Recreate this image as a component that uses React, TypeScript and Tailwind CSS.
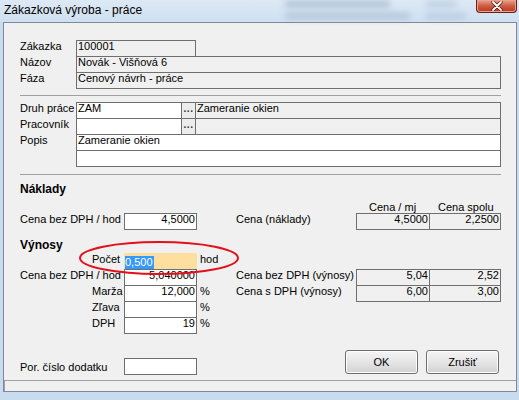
import React from "react";

type BoxProps = {
  className?: string;
  white?: boolean;
  right?: boolean;
  children?: React.ReactNode;
};

// flat edit box as drawn by the old VCL form
function Box({ className = "", white, right, children }: BoxProps) {
  return (
    <div
      className={`h-[17px] shrink-0 overflow-hidden whitespace-nowrap border border-[#6f6f6f] leading-[11px] ${
        white ? "bg-white" : "bg-[#f0f0f0]"
      } ${right ? "pr-[1px] text-right" : "pl-[1px]"} ${className}`}
    >
      {children}
    </div>
  );
}

function Label({ className = "", children }: { className?: string; children?: React.ReactNode }) {
  return <div className={`shrink-0 whitespace-nowrap pt-[1px] leading-[11px] ${className}`}>{children}</div>;
}

function DotsButton() {
  return (
    <div className="flex h-[17px] w-[15px] shrink-0 items-end justify-center -ml-px border border-[#6f6f6f] bg-[#ececec] pb-[3px] text-[10px] font-bold leading-[6px] text-[#333]">
      ···
    </div>
  );
}

function WinButton({ children }: { children: React.ReactNode }) {
  return (
    <button className="flex h-[24px] w-[73px] items-center justify-center rounded-[3px] border border-[#707070] bg-gradient-to-b from-[#f4f4f4] via-[#e6e6e6] to-[#d2d2d2] text-[11px] text-black shadow-[inset_0_0_0_1px_#fcfcfc]">
      {children}
    </button>
  );
}

export default function App() {
  return (
    <div className="relative flex h-[400px] w-[519px] flex-col overflow-hidden bg-[#c9dcef] font-['Liberation_Sans',Arial,sans-serif] text-[11px] text-black">
      {/* title bar */}
      <div className="flex h-[22px] shrink-0 items-start bg-gradient-to-b from-[#dde9f5] to-[#cfe0f1]">
        <div className="pl-[4px] pt-[3px] text-[12px] leading-[14px] text-black">Zákazková výroba - práce</div>
        <div className="ml-auto mr-[10px] flex gap-[16px] pt-[1px] opacity-50 blur-[3px]">
          <div className="flex flex-col gap-[6px]">
            <div className="h-[6px] w-[105px] bg-[#7f97b3]" />
            <div className="h-[6px] w-[125px] bg-[#8ea4be]" />
          </div>
          <div className="flex flex-col gap-[6px]">
            <div className="h-[6px] w-[30px] bg-[#9fb4cc]" />
            <div className="h-[6px] w-[40px] bg-[#9fb4cc]" />
          </div>
        </div>
        <div className="mr-[2px] flex h-[13px] w-[41px] items-center justify-center rounded-b-[4px] border border-t-0 border-[#6b2216] bg-gradient-to-b from-[#e6a28f] via-[#cd5a40] to-[#b8391f] shadow-[inset_0_0_0_1px_#eaa08d]">
          <svg width="12" height="10" viewBox="0 0 12 10">
            <path d="M2 1 L10 9 M10 1 L2 9" stroke="#4a1a12" strokeWidth="3.2" strokeLinecap="round" />
            <path d="M2 1 L10 9 M10 1 L2 9" stroke="#ffffff" strokeWidth="1.8" strokeLinecap="round" />
          </svg>
        </div>
      </div>

      {/* client area */}
      <div className="ml-[3px] mr-[2px] flex h-[370px] shrink-0 flex-col border border-[#7d8a99] bg-[#f0f0f0]">
        <div className="flex flex-col pl-[16px] pr-[15px] pt-[17px]">
          {/* header info */}
          <div className="flex h-[16px]">
            <Label className="w-[56px]">Zákazka</Label>
            <Box className="w-[120px]">100001</Box>
          </div>
          <div className="flex h-[16px]">
            <Label className="w-[56px]">Názov</Label>
            <Box className="w-[425px]">Novák - Višňová 6</Box>
          </div>
          <div className="flex h-[16px]">
            <Label className="w-[56px]">Fáza</Label>
            <Box className="w-[425px]">Cenový návrh - práce</Box>
          </div>

          <div className="mt-[7px] h-px w-[481px] bg-[#a0a0a0]" />

          {/* work */}
          <div className="mt-[6px] flex h-[16px]">
            <Label className="w-[56px]">Druh práce</Label>
            <Box white className="w-[106px]">ZAM</Box>
            <DotsButton />
            <Box className="-ml-px w-[306px]">Zameranie okien</Box>
          </div>
          <div className="flex h-[16px]">
            <Label className="w-[56px]">Pracovník</Label>
            <Box white className="w-[106px]" />
            <DotsButton />
            <Box className="-ml-px w-[306px]" />
          </div>
          <div className="flex h-[16px]">
            <Label className="w-[56px]">Popis</Label>
            <Box white className="w-[425px]">Zameranie okien</Box>
          </div>
          <div className="flex h-[16px]">
            <div className="w-[56px] shrink-0" />
            <Box white className="w-[425px]" />
          </div>

          <div className="mt-[8px] h-px w-[481px] bg-[#a0a0a0]" />

          {/* costs */}
          <div className="mt-[8px] h-[13px] text-[12px] font-bold leading-[13px]">Náklady</div>
          <div className="mt-[5px] flex h-[12px] leading-[12px]">
            <div className="ml-[336px] w-[73px] pl-[13px]">Cena / mj</div>
            <div className="w-[72px] pl-[9px]">Cena spolu</div>
          </div>
          <div className="flex h-[16px]">
            <Label className="w-[104px]">Cena bez DPH / hod</Label>
            <Box white right className="w-[73px]">4,5000</Box>
            <Label className="ml-[39px] w-[120px]">Cena (náklady)</Label>
            <Box right className="w-[74px]">4,5000</Box>
            <Box right className="-ml-px w-[72px]">2,2500</Box>
          </div>

          {/* revenue */}
          <div className="mt-[10px] h-[13px] text-[12px] font-bold leading-[13px]">Výnosy</div>
          <div className="mt-[1px] flex h-[16px]">
            <Label className="w-[104px] pl-[72px]">Počet</Label>
            <div className="h-[16px] w-[73px] shrink-0 bg-[#ffdfa0] pl-[1px] pt-[1px]">
              <span className="inline-block h-[14px] bg-[#3399ff] pr-[1px] leading-[13px] text-white">0,500</span>
            </div>
            <Label className="ml-[3px]">hod</Label>
          </div>
          <div className="flex h-[16px]">
            <Label className="w-[104px]">Cena bez DPH / hod</Label>
            <Box white right className="w-[73px]">5,040000</Box>
            <Label className="ml-[39px] w-[120px]">Cena bez DPH (výnosy)</Label>
            <Box right className="w-[74px]">5,04</Box>
            <Box right className="-ml-px w-[72px]">2,52</Box>
          </div>
          <div className="flex h-[16px]">
            <Label className="w-[104px] pl-[72px]">Marža</Label>
            <Box white right className="w-[73px]">12,000</Box>
            <Label className="ml-[3px] w-[36px]">%</Label>
            <Label className="w-[120px]">Cena s DPH (výnosy)</Label>
            <Box right className="w-[74px]">6,00</Box>
            <Box right className="-ml-px w-[72px]">3,00</Box>
          </div>
          <div className="flex h-[16px]">
            <Label className="w-[104px] pl-[72px]">Zľava</Label>
            <Box white right className="w-[73px]" />
            <Label className="ml-[3px]">%</Label>
          </div>
          <div className="flex h-[16px]">
            <Label className="w-[104px] pl-[72px]">DPH</Label>
            <Box white right className="w-[73px]">19</Box>
            <Label className="ml-[3px]">%</Label>
          </div>

          {/* bottom row */}
          <div className="mt-[17px] flex items-end">
            <div className="flex items-center">
              <Label className="w-[104px] pt-0">Por. číslo dodatku</Label>
              <Box white className="w-[73px]" />
            </div>
            <div className="mb-px ml-auto mr-[2px] flex gap-[8px]">
              <WinButton>OK</WinButton>
              <WinButton>Zrušiť</WinButton>
            </div>
          </div>
        </div>

        {/* status bar */}
        <div className="mt-auto h-[11px] border-l border-t border-[#a0a0a0] bg-[#f0f0f0]" />
      </div>

      {/* red annotation */}
      <svg className="absolute left-[78px] top-[239px]" width="164" height="38" viewBox="0 0 164 38">
        <ellipse cx="81" cy="19" rx="79" ry="16" fill="none" stroke="#e3101c" strokeWidth="2" />
      </svg>
    </div>
  );
}
